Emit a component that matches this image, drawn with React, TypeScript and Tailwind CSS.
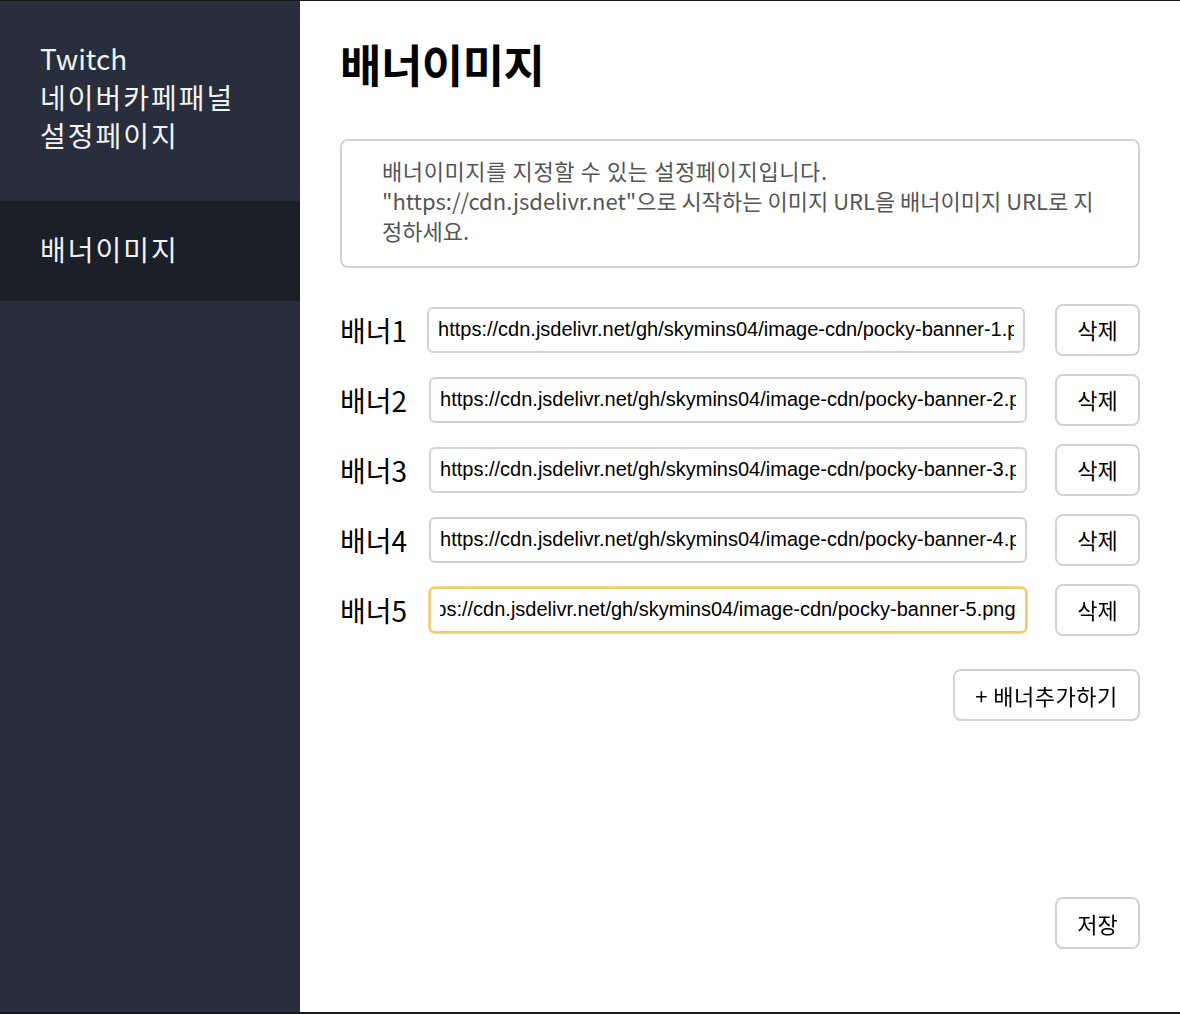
import React, { useEffect, useRef, useState } from 'react';

const KR = "font-['Noto_Sans_CJK_KR',sans-serif]";

const initial = [1, 2, 3, 4, 5].map(
  (n) => `https://cdn.jsdelivr.net/gh/skymins04/image-cdn/pocky-banner-${n}.png`
);

const App: React.FC = () => {
  const [banners, setBanners] = useState<string[]>(initial);
  const lastRef = useRef<HTMLInputElement>(null);

  useEffect(() => {
    const el = lastRef.current;
    if (el) {
      el.focus();
      el.setSelectionRange(el.value.length, el.value.length);
      el.scrollLeft = el.scrollWidth;
    }
  }, []);

  const update = (i: number, v: string) => {
    setBanners((prev) => prev.map((b, j) => (j === i ? v : b)));
  };

  return (
    <div className={`flex h-[1014px] w-full border-t border-b-2 border-[#161a1f] bg-white ${KR}`}>
      {/* Sidebar */}
      <aside className="flex w-[300px] shrink-0 flex-col bg-[#282e3b] text-[#f2f3f5]">
        <div className="h-[200px] px-10 pt-[38px] text-[28px] leading-[38.5px]">
          Twitch
          <br />
          <span className="tracking-[2px]">네이버카페패널</span>
          <br />
          <span className="tracking-[2px]">설정페이지</span>
        </div>
        <div className="flex h-[100px] items-center bg-[#1b1f27] px-10 pb-1 text-[28px] tracking-[2px]">
          배너이미지
        </div>
      </aside>

      {/* Main */}
      <main className="flex flex-1 flex-col px-10 pt-[35px]">
        <h1 className="text-[45px] font-bold leading-[56px] tracking-[-0.5px] text-black">배너이미지</h1>

        <div className="mt-[47px] rounded-lg border-2 border-[#d2d2d2] px-10 pb-[21px] pt-[14px] text-[22px] leading-[30px] text-[#555]">
          <span className="tracking-[0.6px]">배너이미지를 지정할 수 있는 설정페이지입니다.</span>
          <br />
          "https://cdn.jsdelivr.net"으로 시작하는 이미지 URL을 배너이미지 URL로 지정하세요.
        </div>

        <div className="mt-[36px] flex flex-col gap-[19px]">
          {banners.map((b, i) => (
            <div key={i} className="flex h-[51px] items-center">
              <span className={`text-[28px] leading-none text-black ${i === 0 ? 'mr-5' : 'mr-[22px]'}`}>
                배너{i + 1}
              </span>
              <input
                ref={i === banners.length - 1 ? lastRef : undefined}
                value={b}
                onChange={(e) => update(i, e.target.value)}
                className={`h-[46px] w-[598px] rounded-md border-2 bg-white px-[9px] font-['Liberation_Sans',Arial,sans-serif] text-[20px] text-black outline-none ${
                  i === banners.length - 1 ? 'border-[#efcb74] ring-1 ring-[#f3d690]' : 'border-[#d2d2d2]'
                }`}
              />
              <button className="ml-auto h-[52px] w-[85px] rounded-lg border-2 border-[#d2d2d2] bg-white text-[22px] text-black">
                삭제
              </button>
            </div>
          ))}
        </div>

        <div className="mt-[34px] flex justify-end">
          <button
            onClick={() => setBanners((prev) => [...prev, ''])}
            className="h-[52px] w-[187px] rounded-lg border-2 border-[#d2d2d2] bg-white text-[22px] tracking-[0.5px] text-black"
          >
            + 배너추가하기
          </button>
        </div>

        <div className="mt-[176px] flex justify-end">
          <button className="h-[52px] w-[85px] rounded-lg border-2 border-[#d2d2d2] bg-white text-[22px] text-black">
            저장
          </button>
        </div>
      </main>
    </div>
  );
};

export default App;
